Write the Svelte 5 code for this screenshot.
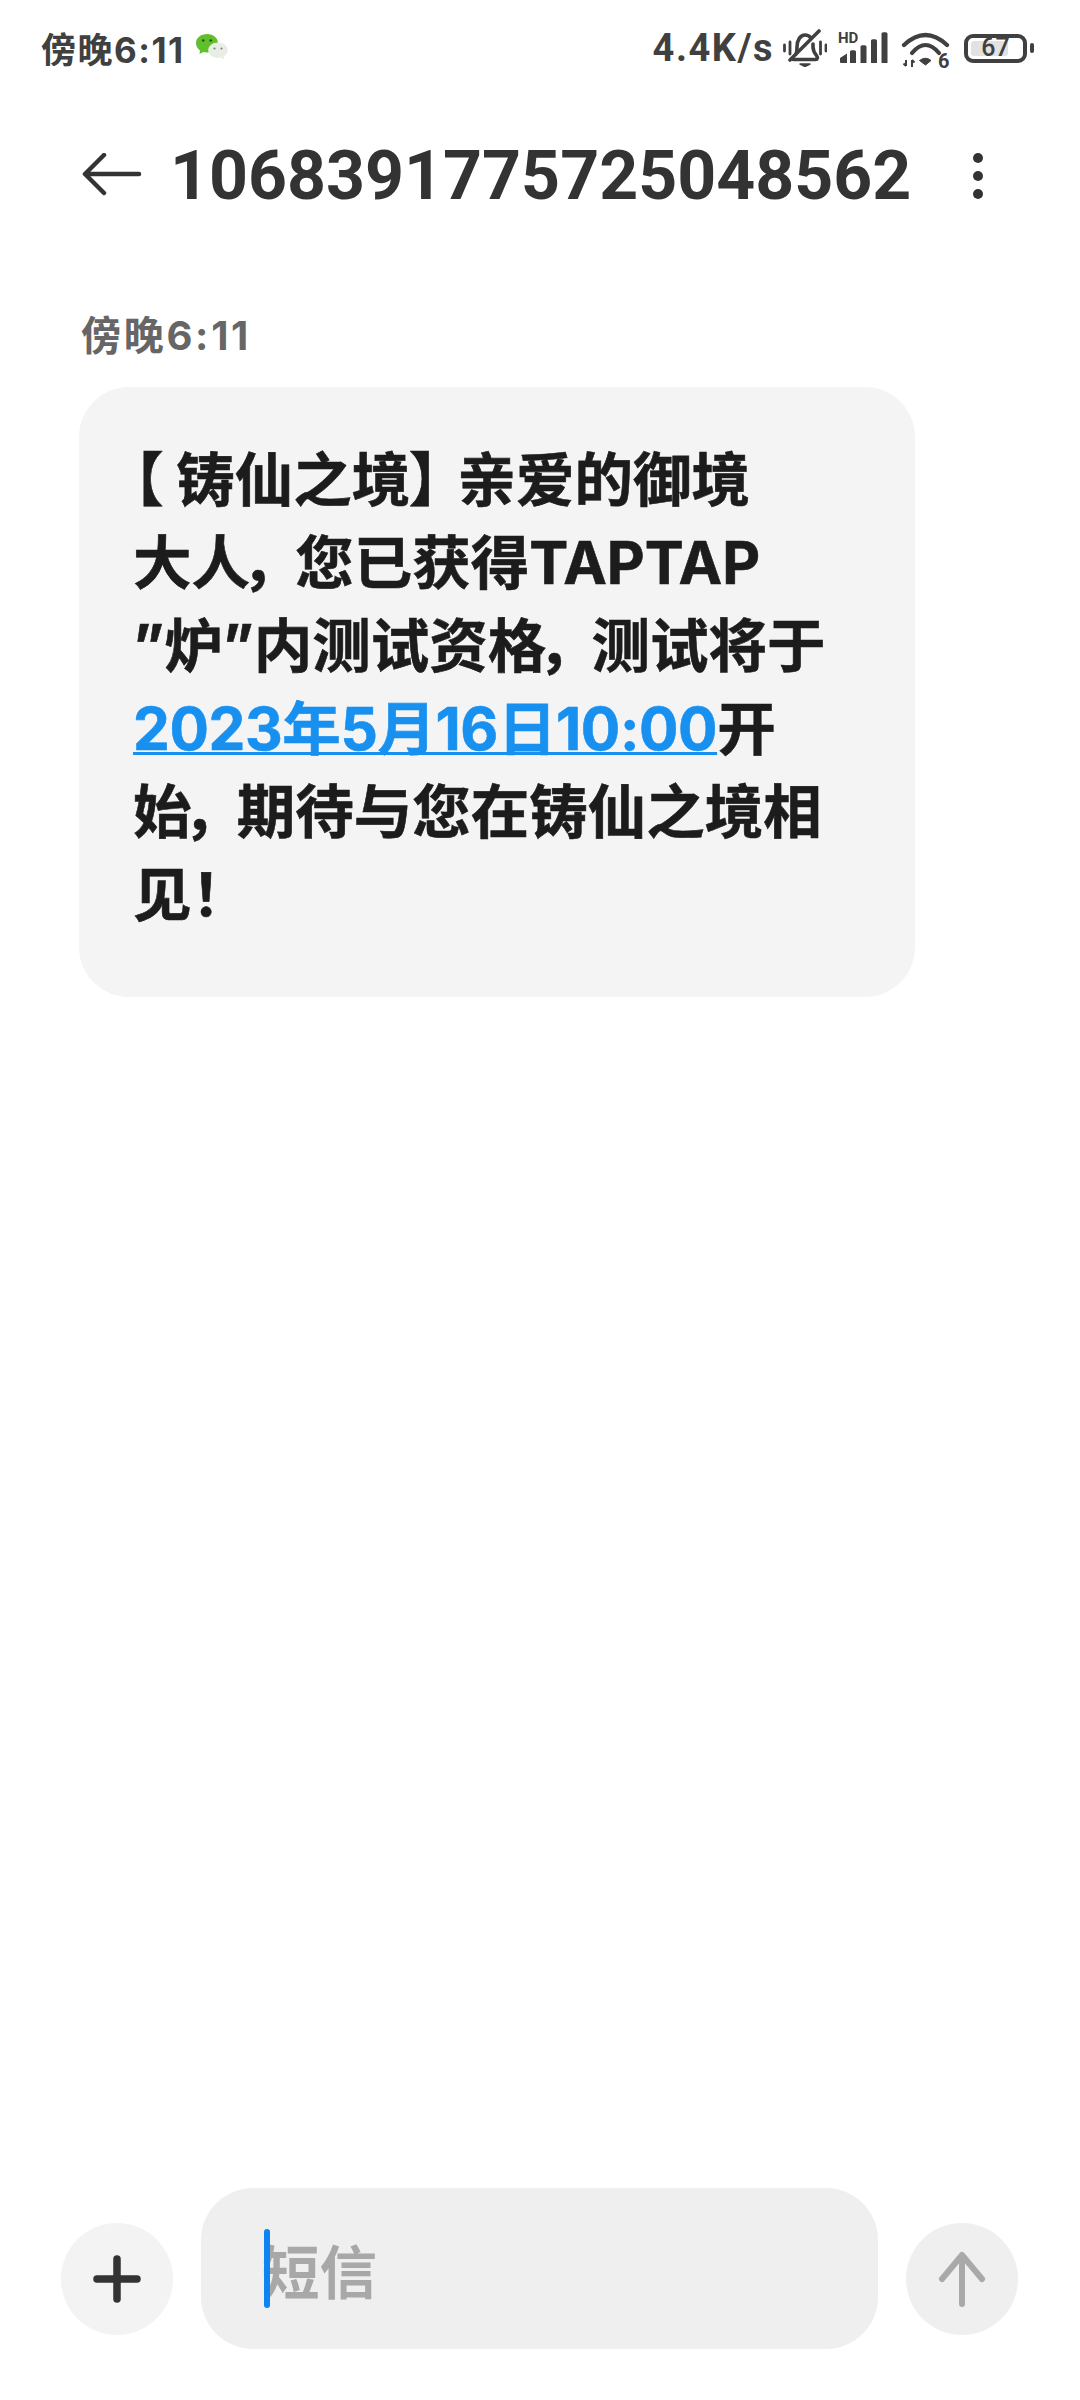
<script>
  // Single SMS thread screen: status bar, title row, one received message, composer
  const number = "1068391775725048562";
  const time = "傍晚6:11";
</script>

<div class="screen">
  <div class="status">
    <div class="status-left">
      <span class="clock">{time}</span>
      <svg class="wechat" width="34" height="30" viewBox="0 0 34 30">
        <path d="M12 1C5.600 1 1 5 1 10.200c0 3 1.600 5.500 4 7.200L4.500 21l4-2c1.100.3 2.300.5 3.500.5 6.400 0 11-4.200 11-9.300S18.400 1 12 1z" fill="#5fbf2d" />
        <circle cx="8.200" cy="7.500" r="1.300" fill="#24560f" />
        <circle cx="15.800" cy="7.500" r="1.300" fill="#24560f" />
        <path d="M23 9.500c-5.500 0-9.800 3.500-9.800 7.700s4.300 7.700 9.800 7.700c1 0 1.900-.1 2.800-.4l3.400 1.900-.6-3c2.500-1.400 4.200-3.600 4.200-6.200 0-4.200-4.300-7.700-9.800-7.700z" fill="#e9eee4" />
        <circle cx="19.500" cy="15.500" r="1" fill="#777" />
        <circle cx="26.500" cy="15.500" r="1" fill="#777" />
      </svg>
    </div>
    <div class="status-right">
      <span class="speed">4.4K/s</span>
      <svg class="bell" width="44" height="38" viewBox="0 0 44 38" fill="none" stroke="#404040">
        <path d="M1.500 16v6M7 13v12M37.500 13v12M43 16v6" stroke-width="2.800" stroke-linecap="round" />
        <path d="M13 25c.8-1.500 1-3 1-7 0-7 3.500-12 8-12 2.500 0 4.500 1 6 3M30 15v3c0 3 1.500 6 3.500 8.500 1.500 2 1 4-1 4H10" stroke-width="3.600" stroke-linecap="round" stroke-linejoin="round" />
        <path d="M17 35h10l-5 2.500z" fill="#404040" stroke-width="1.500" stroke-linejoin="round" />
        <path d="M7 31L36 2" stroke-width="3.600" stroke-linecap="round" />
      </svg>
      <svg class="signal" width="52" height="42" viewBox="0 -6 52 42">
        <text x="0" y="11" class="hd">HD</text>
        <path d="M2 26l7-4.500V31H3.500C2.500 31 2 30.500 2 29.500zM12 20c0-1 .6-1.800 1.800-1.800h2.400c1.200 0 1.800.8 1.800 1.800v11h-6zM22.500 15c0-1 .6-1.800 1.800-1.800h2.400c1.200 0 1.800.8 1.800 1.800v16h-6zM33 9c0-1 .6-1.800 1.800-1.800h2.400C38.400 7.200 39 8 39 9v22h-6zM43.500 2c0-1 .6-1.800 1.800-1.800h2.400c1.200 0 1.800.8 1.800 1.800v29h-6z" fill="#404040" />
      </svg>
      <svg class="wifi" width="52" height="50" viewBox="0 -8 52 50" fill="none" stroke="#404040">
        <path d="M3 13Q24.500 -7 46 13" stroke-width="4.200" stroke-linecap="round" />
        <path d="M11 21Q24.500 5 38 21" stroke-width="4.200" stroke-linecap="round" />
        <path d="M18.500 28.500Q24.500 24 30 28.500L24.500 33z" fill="#404040" stroke-width="1" stroke-linejoin="round" />
        <path d="M5 34v-6M2.500 31.500L5 34M11 35v-7M11 28l2.500 2.500" stroke-width="2" />
        <text x="37" y="36" class="wifi-six">6</text>
      </svg>
      <div class="battery">
        <div class="battery-shell">
          <div class="battery-fill"></div>
          <span class="battery-num">67</span>
        </div>
        <div class="battery-nub"></div>
      </div>
    </div>
  </div>

  <header class="title-row">
    <svg class="back" width="60" height="46" viewBox="0 0 60 46" fill="none" stroke="#333" stroke-width="4.500" stroke-linecap="round" stroke-linejoin="round">
      <path d="M22 2L3 21l19 19M3.500 21H57" />
    </svg>
    <h1>{number}</h1>
    <div class="more">
      <i></i><i></i><i></i>
    </div>
  </header>

  <main class="thread">
    <div class="stamp">{time}</div>
    <div class="bubble">
      <span class="open">【</span>铸仙之境<span class="close">】</span>亲爱的御境<br />
      大人<span class="comma">，</span>您已获得TAPTAP<br />
      ”炉”内测试资格<span class="comma">，</span>测试将于<br />
      <span class="link">2023年5月16日10:00</span>开<br />
      始<span class="comma">，</span>期待与您在铸仙之境相<br />
      见！
    </div>
  </main>

  <footer class="composer">
    <button class="round plus" aria-label="Add">
      <svg width="48" height="48" viewBox="0 0 48 48" stroke="#333" stroke-width="7.500" stroke-linecap="round">
        <path d="M24 4v40M4 24h40" />
      </svg>
    </button>
    <div class="field">
      <span class="caret"></span>
      <span class="placeholder">短信</span>
    </div>
    <button class="round send" aria-label="Send">
      <svg width="48" height="56" viewBox="0 0 48 56" fill="none" stroke="#a9a9a9" stroke-width="6" stroke-linecap="round" stroke-linejoin="round">
        <path d="M24 5v48M4 28L24 4l20 24" />
      </svg>
    </button>
  </footer>
</div>

<style>
  :global(body) {
    margin: 0;
    background: #fff;
  }
  .screen {
    width: 1080px;
    height: 2400px;
    display: flex;
    flex-direction: column;
    font-family: Roboto, "Noto Sans CJK SC", sans-serif;
    background: #fff;
    overflow: hidden;
  }
  .status {
    display: flex;
    justify-content: space-between;
    align-items: center;
    height: 48px;
    padding: 24px 46px 0 41px;
    color: #404040;
  }
  .status-left, .status-right {
    display: flex;
    align-items: center;
  }
  .clock {
    font-family: Inter, "Noto Sans CJK SC", sans-serif;
    font-size: 35px;
    font-weight: 700;
    letter-spacing: 1.500px;
    line-height: 48px;
    position: relative;
    top: 2px;
  }
  .wechat { margin-left: 10px; }
  .speed {
    font-size: 38px;
    font-weight: 700;
    letter-spacing: 1.500px;
    line-height: 48px;
  }
  .bell { margin-left: 9px; }
  .signal { margin: 0 0 2px 11px; }
  .wifi { margin: 2px 0 0 11px; }
  .hd {
    font-size: 15px;
    font-weight: 700;
    fill: #404040;
    stroke: none;
  }
  .wifi-six {
    font-size: 20px;
    font-weight: 700;
    fill: #404040;
    stroke: none;
  }
  .battery {
    display: flex;
    align-items: center;
    gap: 3px;
    margin-left: 11px;
  }
  .battery-shell {
    position: relative;
    width: 63px;
    height: 29px;
    box-sizing: border-box;
    border: 4px solid #404040;
    border-radius: 9px;
    display: flex;
    align-items: center;
    justify-content: center;
  }
  .battery-fill {
    position: absolute;
    left: 3px;
    top: 3px;
    bottom: 3px;
    width: 37px;
    background: #e2e2e2;
    border-radius: 3px;
  }
  .battery-num {
    position: relative;
    font-size: 25px;
    font-weight: 500;
    line-height: 22px;
  }
  .battery-nub {
    width: 4px;
    height: 10px;
    background: #404040;
    border-radius: 2px;
  }
  .title-row {
    display: flex;
    align-items: center;
    height: 100px;
    margin-top: 54px;
    padding: 0 0 0 82px;
  }
  .back { flex: none; }
  h1 {
    margin: 0 0 0 28px;
    font-size: 68px;
    font-weight: 700;
    color: #333;
    line-height: 100px;
    white-space: nowrap;
  }
  .more {
    display: flex;
    flex-direction: column;
    gap: 8px;
    margin-left: 62px;
  }
  .more i {
    display: block;
    width: 10px;
    height: 10px;
    border-radius: 50%;
    background: #333;
  }
  .thread {
    flex: 1;
    padding: 0 0 0 79px;
  }
  .stamp {
    margin-top: 83px;
    padding-left: 2px;
    font-family: Inter, "Noto Sans CJK SC", sans-serif;
    font-size: 40px;
    font-weight: 700;
    letter-spacing: 2.700px;
    line-height: 54px;
    color: #666;
  }
  .bubble {
    width: 836px;
    height: 610px;
    box-sizing: border-box;
    margin-top: 24px;
    padding: 51px 0 0 54px;
    background: #f4f4f4;
    border-radius: 50px;
    font-family: Inter, "Noto Sans CJK SC", sans-serif;
    font-feature-settings: "palt";
    font-size: 58.500px;
    font-weight: 700;
    line-height: 83px;
    color: #1c1c1c;
    white-space: nowrap;
    -webkit-text-stroke: 0.6px currentColor;
  }
  .open { letter-spacing: 14px; }
  .close { letter-spacing: 18px; }
  .comma { letter-spacing: 16px; }
  .link {
    color: #1890f0;
    letter-spacing: -0.4px;
    text-decoration: underline;
    text-decoration-thickness: 3px;
  }
  .composer {
    display: flex;
    align-items: flex-end;
    padding: 0 62px 51px 61px;
  }
  .round {
    flex: none;
    display: flex;
    align-items: center;
    justify-content: center;
    width: 112px;
    height: 112px;
    margin-bottom: 14px;
    padding: 0;
    border: none;
    border-radius: 50%;
  }
  .plus { background: #f3f3f3; }
  .send { background: #efefef; }
  .field {
    position: relative;
    flex: 1;
    height: 161px;
    margin: 0 28px;
    padding-left: 61px;
    display: flex;
    align-items: center;
    background: #efefef;
    border-radius: 52px;
  }
  .caret {
    position: absolute;
    left: 63px;
    top: 41px;
    width: 6px;
    height: 79px;
    background: #0d84f2;
    border-radius: 3px;
  }
  .placeholder {
    font-size: 57.500px;
    font-weight: 700;
    color: #a8a8a8;
  }
</style>
